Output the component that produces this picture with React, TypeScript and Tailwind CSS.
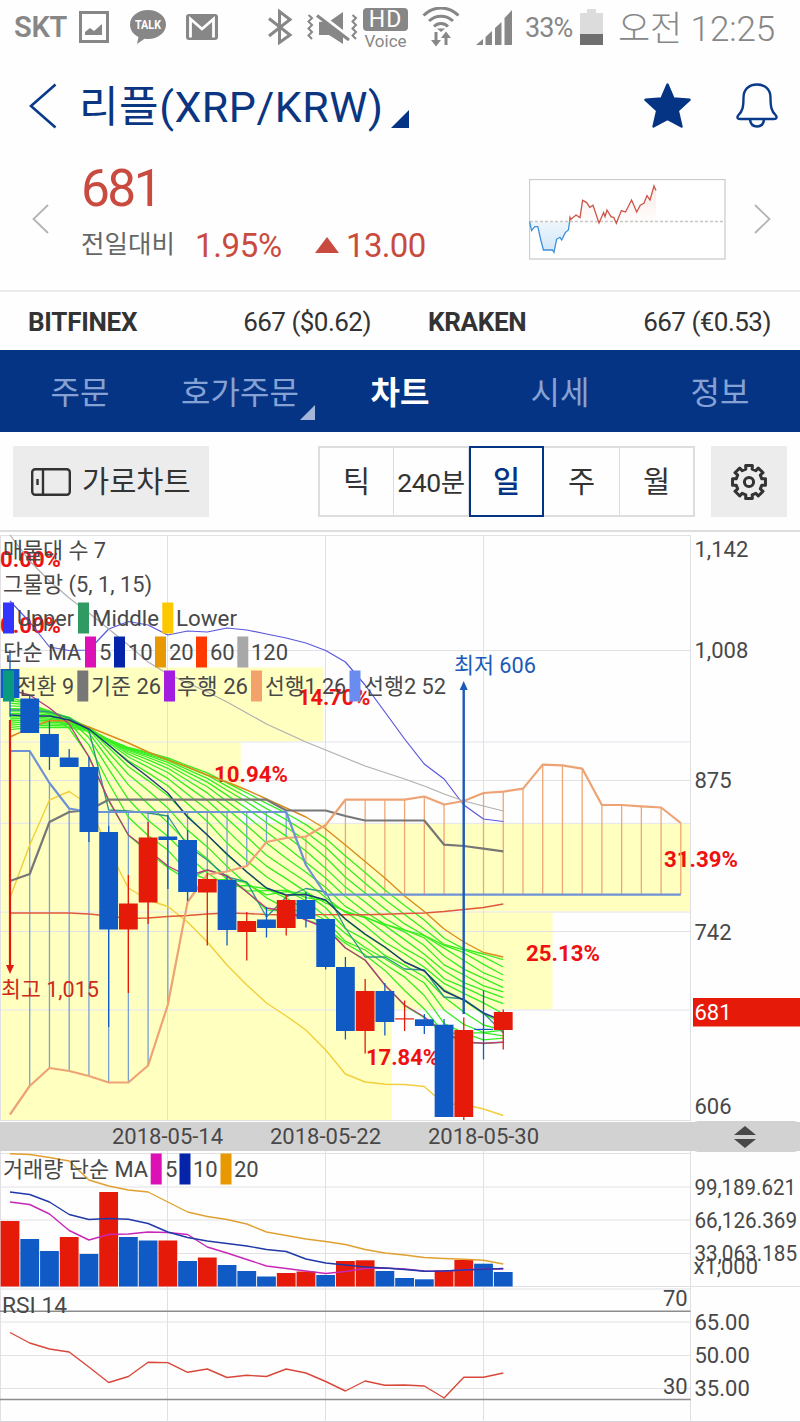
import type { ReactNode } from 'react';

const FONT = "font-[Roboto,'Noto_Sans_CJK_KR',sans-serif]";

const RED = '#e61a09';
const BLUE = '#105ac6';

const STEP = 19.73;
const cx = (i: number) => 10 + STEP * i;

// [top, bottom, high, low, rising]
const CANDLES: [number, number, number, number, boolean][] = [
  [669, 698, 650, 717, false],
  [698.5, 733, 696, 733, false],
  [734, 757, 721, 770, false],
  [757.5, 767, 749, 767, false],
  [767, 832, 757, 842, false],
  [832, 929.5, 826, 1027, false],
  [903.5, 929.5, 875, 993, true],
  [837.5, 902.5, 822, 924, true],
  [836.5, 840, 815, 889, false],
  [840, 892, 830, 901, false],
  [879, 892.5, 873, 945.5, true],
  [880, 930, 876, 945.5, false],
  [921, 932, 912, 960.5, true],
  [919.5, 928, 907, 937.5, false],
  [900, 928, 895, 935.5, true],
  [900, 919, 892, 927.5, false],
  [919, 967, 919, 969.5, false],
  [967, 1031, 957, 1039.5, false],
  [991, 1031, 979, 1053.5, true],
  [991, 1022, 983, 1035.5, false],
  [1018.3, 1019.5, 1000.5, 1031, true],
  [1019.3, 1026, 1014, 1034, false],
  [1024.7, 1117, 1019, 1117, false],
  [1030, 1117, 1017.5, 1120, true],
  [1028.8, 1030, 990.5, 1059.5, false],
  [1012, 1030, 1009.5, 1049.5, true],
];

const UPPER = [601, 622, 647, 650.5, 650, 629, 621.5, 625, 635, 631, 632, 628, 630, 634, 638, 643, 650.5, 662, 685, 712, 739, 764, 779, 805, 819, 821.5];
const LOWER = [898, 845, 800, 791.5, 805, 850, 888, 900, 906.5, 922, 942, 965, 985, 1003, 1016, 1030, 1050, 1074, 1082, 1084.3, 1084.5, 1086.5, 1104, 1104.5, 1109, 1115.5];
const MA5 = [690, 695, 708, 724, 757, 800, 835, 850, 866, 876, 870, 876, 892, 908, 911, 920, 928, 948, 960, 985, 1005, 1017, 1032, 1042, 1043.3, 1042.3];
const MA10 = [715, 716, 716, 720, 729, 745, 762, 777, 793, 817, 835, 854, 872, 888, 895, 894.5, 900, 919, 934, 947, 962, 971, 991, 1000, 1013, 1021];
const MA20 = [737, 728, 720.5, 721, 727, 735, 743, 752, 760, 767, 775, 782, 790, 799, 808, 817, 829, 845, 861.5, 878, 896, 911.5, 929, 942, 952.5, 957];
const MA60 = [913, 913, 913, 913, 914, 916, 918.5, 918, 916.5, 915.5, 914, 913, 913.5, 914.5, 915, 914.6, 914.6, 914.7, 914.7, 914.3, 913.5, 913, 911.5, 909.5, 907.5, 904];
const MA120 = [535, 561, 581, 598, 613, 629, 645, 662, 674, 683, 692, 702, 713, 724, 733, 742, 750, 758, 766, 772.5, 779, 786, 794, 801, 806, 811];
const TENKAN = [710, 710, 712, 718, 730, 810, 811, 813, 816, 846, 860, 877, 882, 917, 897, 888.5, 892, 928, 957, 957, 969, 970, 997, 999, 1013, 1033];
const KIJUN = [881, 874, 822, 812, 810, 799.7, 799.7, 799.7, 799.7, 799.7, 799.7, 799.7, 799.7, 799.7, 810.5, 810.5, 810.5, 816, 820.5, 820.5, 820.5, 820.5, 844.7, 846, 848.7, 851.3];
const SPAN_A = [1114.5, 1086, 1068, 1071, 1076, 1082.5, 1082.5, 1065.5, 1005, 902, 874.5, 871.5, 866, 842, 838, 836.5, 825, 799.7, 799.7, 799.7, 799.7, 796.5, 804.5, 801, 793, 791.7, 788.6, 764.6, 765.3, 768.6, 805, 805, 806.3, 807.5, 823];
const SPAN_B = SPAN_A.map((_, i) => {
  if (i < 2) return 751;
  if (i === 2) return 783;
  if (i === 3) return 808.5;
  if (i < 15) return 812;
  return i === 15 ? 865 : 894.6;
});

const VOLUME: [number, boolean][] = [
  [1221, true], [1239, false], [1251, false], [1237, true], [1254, false], [1192, true], [1237, false],
  [1240.5, false], [1240.5, true], [1261, false], [1257.5, true], [1265, false], [1271, false],
  [1276.5, false], [1273, true], [1271.5, true], [1275, false], [1261, true], [1260.3, true],
  [1271, false], [1278, false], [1279.3, false], [1270.3, true], [1260, true], [1263.7, false], [1272, false],
];
const VOL5 = [1202, 1204.5, 1214, 1230.5, 1240, 1234.5, 1234, 1232, 1232.5, 1234.5, 1247, 1253, 1259.5, 1266, 1268.5, 1271, 1273.5, 1271.5, 1268.5, 1268, 1269, 1271, 1271.3, 1269.8, 1269, 1269];
const VOL10 = [1192, 1194.5, 1202, 1214.5, 1219.5, 1218.5, 1219.3, 1223.5, 1232, 1237.5, 1241, 1243.5, 1246, 1249.5, 1251.5, 1259, 1263, 1265, 1267, 1268, 1269.5, 1271.3, 1271, 1270, 1269.3, 1268.5];
const VOL20 = [1153.7, 1154.5, 1157.5, 1161, 1180, 1186, 1190, 1192, 1202, 1212, 1216.5, 1219.5, 1224, 1232, 1235.5, 1239, 1241.5, 1244.5, 1249.5, 1253, 1255, 1257.5, 1258.5, 1259.3, 1260.3, 1264];
const RSI = [1332.5, 1343, 1349, 1352, 1367, 1382.5, 1376.5, 1362.3, 1362.6, 1372.3, 1369, 1377.5, 1375.3, 1376.5, 1369, 1373, 1381.5, 1391, 1381, 1385.3, 1385, 1386, 1398, 1377.2, 1377.2, 1373];

// closes before the visible range, oldest first, needed by the averages of the net
const PRIOR = [770, 765, 760, 755, 750, 745, 740, 735, 735, 735, 730, 725, 720, 715, 705, 700, 695, 690];

const toPrice = (y: number) => 875 * Math.exp((780.3 - y) / 916);
const toY = (price: number) => 780.3 - 916 * Math.log(price / 875);

const closes = [...PRIOR, ...CANDLES.map(([top, bottom, , , up]) => (up ? top : bottom))].map(toPrice);

function movingAverage(length: number) {
  return CANDLES.map((_, i) => {
    const end = PRIOR.length + i + 1;
    const part = closes.slice(Math.max(0, end - length), end);
    return toY(part.reduce((a, b) => a + b, 0) / part.length);
  });
}

const NET = Array.from({ length: 15 }, (_, k) => movingAverage(5 + k));

const points = (ys: number[]) => ys.map((y, i) => `${cx(i).toFixed(1)},${y.toFixed(1)}`).join(' ');

function Line({ ys, color, width = 1.2 }: { ys: number[]; color: string; width?: number }) {
  return <polyline points={points(ys)} fill="none" stroke={color} strokeWidth={width} strokeLinejoin="round" />;
}

interface LabelProps {
  x: number;
  y: number;
  w?: number;
  children: ReactNode;
  fill?: string;
  className?: string;
}

function Label({ x, y, w, children, fill = '#484848', className = 'text-[22px]' }: LabelProps) {
  return (
    <text x={x} y={y} fill={fill} className={className} textLength={w} lengthAdjust="spacingAndGlyphs">
      {children}
    </text>
  );
}

function Swatches({ y, items }: { y: number; items: [number, string][] }) {
  return (
    <>
      {items.map(([x, color]) => (
        <rect key={x} x={x} y={y} width={11} height={31} fill={color} />
      ))}
    </>
  );
}

function GridX({ y1, y2 }: { y1: number; y2: number }) {
  return (
    <g stroke="#e0e0e4">
      {[0.5, 167.5, 325.5, 483.5, 690.5].map((x) => (
        <line key={x} x1={x} x2={x} y1={y1} y2={y2} />
      ))}
    </g>
  );
}

function GridY({ ys }: { ys: number[] }) {
  return (
    <g stroke="#e2e2e6">
      {ys.map((y) => (
        <line key={y} x1={0} x2={691} y1={y} y2={y} />
      ))}
    </g>
  );
}

const BANDS = [
  [323, 667.5, 74],
  [240.7, 742, 81.5],
  [690.5, 823.5, 88],
  [552.5, 912, 97.5],
  [392, 1010, 110],
];

function PriceChart() {
  return (
    <svg viewBox="0 532 800 590" className="block w-[800px] h-[590px]">
      {BANDS.map(([w, y, h]) => (
        <rect key={y} x={0} y={y} width={w} height={h} fill="#ffffc0" />
      ))}
      <GridY ys={[535.5, 650.5, 780.5, 931.5, 1120.5]} />
      <g stroke="#e4e4ec">
        {[742, 823.3, 912, 1010].map((y) => (
          <line key={y} x1={0} x2={691} y1={y} y2={y} />
        ))}
      </g>
      <GridX y1={535} y2={1121} />

      <g className="font-bold text-[21.5px]">
        <Label x={0} y={567} w={61} fill="#ee1111" className="">0.00%</Label>
        <Label x={0} y={632.5} w={61} fill="#ee1111" className="">0.00%</Label>
        <Label x={298} y={704.7} w={72.5} fill="#ee1111" className="">14.70%</Label>
        <Label x={214} y={782.3} w={74} fill="#ee1111" className="">10.94%</Label>
        <Label x={664} y={867} w={74} fill="#ee1111" className="">31.39%</Label>
        <Label x={526} y={960.7} w={74} fill="#ee1111" className="">25.13%</Label>
        <Label x={366} y={1064.8} w={73} fill="#ee1111" className="">17.84%</Label>
      </g>

      {SPAN_A.map((y, i) =>
        i === 0 ? null : (
          <line
            key={i}
            x1={cx(i)}
            x2={cx(i)}
            y1={y}
            y2={SPAN_B[i]}
            stroke={y > SPAN_B[i] ? '#7a9fd2' : '#eea673'}
            strokeWidth={1.3}
          />
        ),
      )}

      {NET.map((ys, k) => (
        <Line key={k} ys={ys} color="#35ee20" width={1.3} />
      ))}
      <Line ys={UPPER} color="#5a58dc" />
      <Line ys={LOWER} color="#f3cd3c" width={1.4} />
      <Line ys={MA120} color="#b0b0b0" />
      <Line ys={MA60} color="#e0583a" width={1.4} />
      <Line ys={MA20} color="#d88c1c" width={1.4} />
      <Line ys={TENKAN} color="#2f9488" width={1.3} />
      <Line ys={MA5} color="#b83a80" width={1.4} />
      <Line ys={MA10} color="#1d3a78" width={1.4} />
      <Line ys={KIJUN} color="#777777" width={2.2} />
      <Line ys={SPAN_A} color="#eda373" width={2.2} />
      <Line ys={SPAN_B} color="#6f92d6" width={2.2} />

      {CANDLES.map(([top, bottom, high, low, up], i) => (
        <g key={i} fill={up ? RED : BLUE} stroke={up ? RED : BLUE}>
          <line x1={cx(i)} x2={cx(i)} y1={high} y2={low} strokeWidth={1.3} />
          <rect x={cx(i) - 9.4} y={top} width={18.8} height={bottom - top} stroke="none" />
        </g>
      ))}

      <g stroke="#1b5ab8" fill="#1b5ab8">
        <line x1={463.7} x2={463.7} y1={688} y2={1014} strokeWidth={2.4} />
        <path d="M463.7 681 L467.7 690 H459.7 Z" stroke="none" />
      </g>
      <g stroke="#e01a10" fill="#e01a10">
        <line x1={10} x2={10} y1={720} y2={968} strokeWidth={2.2} />
        <path d="M10 974 L14 965 H6 Z" stroke="none" />
      </g>
      <Label x={454} y={673} w={82} fill="#1b5ab8">최저 606</Label>
      <Label x={1} y={997} w={98} fill="#cc2a1a">최고 1,015</Label>

      <Label x={3} y={558} w={103}>매물대 수 7</Label>
      <Label x={3} y={592} w={149}>그물망 (5, 1, 15)</Label>

      <Swatches y={602.5} items={[[3, '#3434ff'], [78, '#2f9a62'], [162.3, '#fcc800']]} />
      <Label x={17} y={626} w={57}>Upper</Label>
      <Label x={92} y={626} w={67}>Middle</Label>
      <Label x={176} y={626} w={61}>Lower</Label>

      <Swatches
        y={636.5}
        items={[[85, '#dc10b4'], [114, '#0624aa'], [155, '#e89800'], [196, '#ff3a00'], [237.3, '#a8a8a8']]}
      />
      <Label x={3} y={660} w={78}>단순 MA</Label>
      <Label x={99} y={660}>5</Label>
      <Label x={128} y={660}>10</Label>
      <Label x={169} y={660}>20</Label>
      <Label x={210} y={660}>60</Label>
      <Label x={251} y={660}>120</Label>

      <Swatches
        y={670.5}
        items={[[3, '#0a9a80'], [77.3, '#777777'], [164, '#a41ce0'], [251, '#f4a26c'], [349.5, '#6a8cf0']]}
      />
      <Label x={17} y={693.5} w={57}>전환 9</Label>
      <Label x={91} y={693.5} w={70}>기준 26</Label>
      <Label x={177} y={693.5} w={71}>후행 26</Label>
      <Label x={265} y={693.5} w={81}>선행1 26</Label>
      <Label x={364} y={693.5} w={82}>선행2 52</Label>

      <Label x={694.5} y={557}>1,142</Label>
      <Label x={694.5} y={658}>1,008</Label>
      <Label x={694.5} y={788}>875</Label>
      <Label x={694.5} y={939.5}>742</Label>
      <rect x={693} y={998} width={107} height={28.5} fill={RED} />
      <Label x={694.5} y={1020} fill="#ffffff">681</Label>
      <Label x={694.5} y={1114}>606</Label>
    </svg>
  );
}

function DateBar() {
  return (
    <div className="relative flex items-center h-[29px] bg-[#d2d2d2] text-[22px] leading-none text-[#484848]">
      <span className="w-[112px] ml-[112px]">2018-05-14</span>
      <span className="w-[112px] ml-[46px]">2018-05-22</span>
      <span className="w-[112px] ml-[46px]">2018-05-30</span>
      <div className="absolute left-[692px] -top-px w-[108px] h-[31px] rounded-md bg-[#d2d2d2] flex items-center pl-[42px]">
        <svg viewBox="0 0 22 22" className="w-[22px] h-[22px]" fill="#484848">
          <path d="M11 0 L22 9 H0 Z M0 13 H22 L11 22 Z" />
        </svg>
      </div>
    </div>
  );
}

function VolumeChart() {
  return (
    <svg viewBox="0 1151 800 137" className="block w-[800px] h-[137px]">
      <GridY ys={[1153.5, 1187, 1220, 1253.5]} />
      <line x1={0} x2={800} y1={1286.5} y2={1286.5} stroke="#e2e2e6" />
      <GridX y1={1151} y2={1288} />
      {VOLUME.map(([top, up], i) => (
        <rect key={i} x={cx(i) - 9.4} y={top} width={18.8} height={1286.5 - top} fill={up ? RED : BLUE} />
      ))}
      <Line ys={VOL20} color="#e0a030" width={1.4} />
      <Line ys={VOL5} color="#c828b8" width={1.4} />
      <Line ys={VOL10} color="#2038a8" width={1.4} />
      <Label x={3} y={1177} w={145}>거래량 단순 MA</Label>
      <Swatches y={1153.5} items={[[150.7, '#dc10b4'], [179.5, '#0624aa'], [220.5, '#e89800']]} />
      <Label x={165} y={1177}>5</Label>
      <Label x={193} y={1177}>10</Label>
      <Label x={234} y={1177}>20</Label>
      <Label x={694.5} y={1194.5} w={101.5}>99,189.621</Label>
      <Label x={694.5} y={1228} w={102.5}>66,126.369</Label>
      <Label x={694.5} y={1260.5} w={102.5}>33,063.185</Label>
      <Label x={693.5} y={1273.5} w={64.5}>x1,000</Label>
    </svg>
  );
}

function RsiChart() {
  return (
    <svg viewBox="0 1288 800 134" className="block w-[800px] h-[134px]">
      <GridY ys={[1289, 1322, 1355.5, 1388.5]} />
      <line x1={0} x2={800} y1={1421.5} y2={1421.5} stroke="#d4d4d8" />
      <GridX y1={1288} y2={1422} />
      <g stroke="#8c8c8c" strokeWidth={1.5}>
        <line x1={0} x2={690.5} y1={1311.3} y2={1311.3} />
        <line x1={0} x2={690.5} y1={1399.4} y2={1399.4} />
      </g>
      <Line ys={RSI} color="#d8483a" width={1.4} />
      <Label x={2} y={1312.5} w={65}>RSI 14</Label>
      <Label x={663} y={1305.5}>70</Label>
      <Label x={663} y={1394}>30</Label>
      <Label x={694.5} y={1329.5}>65.00</Label>
      <Label x={694.5} y={1363}>50.00</Label>
      <Label x={694.5} y={1396}>35.00</Label>
    </svg>
  );
}

function StatusBar() {
  return (
    <div className="flex items-start h-[56px] pl-[14px] text-[#878787] fill-[#878787] whitespace-nowrap leading-none">
      <span className="w-[65px] mt-[13px] text-[29px] font-semibold tracking-[-0.01em]">SKT</span>
      <svg viewBox="0 0 30 32" className="w-[30px] h-[32px] mt-[11px]">
        <path d="M0 0H30V32H0Z M3 3V29H27V3Z" fillRule="evenodd" />
        <path d="M6 24 V21 L11 17 L15 20 L23 13 V24 Z" />
      </svg>
      <svg viewBox="0 0 36 34" className="w-[36px] h-[34px] mt-[10px] ml-[21px]">
        <path d="M18 0C8 0 0 6.300 0 14.500C0 20 3.500 24.500 8.500 27L7 34L14.500 28.800C16 29 17 29 18 29C28 29 36 22.700 36 14.500C36 6.300 28 0 18 0Z" />
        <text x="18" y="19.300" textAnchor="middle" textLength="26" lengthAdjust="spacingAndGlyphs" fill="#fff" className="text-[12.5px] font-bold">
          TALK
        </text>
      </svg>
      <svg viewBox="0 0 32 26" className="w-[32px] h-[26px] mt-[14px] ml-[20px]">
        <rect width="32" height="26" rx="3" />
        <path d="M4.500 23.500V5L16 15L27.500 5V23.500" fill="none" stroke="#fff" strokeWidth="2.800" />
      </svg>
      <svg viewBox="0 0 26 36" className="w-[26px] h-[36px] mt-[9px] ml-[49px]" fill="none" stroke="#878787" strokeWidth="3">
        <path d="M2 9.500L23 26L12.500 33.500V2.500L23 10.500L2 27" />
      </svg>
      <svg viewBox="0 0 52 34" className="w-[52px] h-[34px] mt-[10px] ml-[14px]">
        <path d="M12 12V25H22L36 34V2L23 11Z" />
        <path d="M11 3L43 28" stroke="#fefefe" strokeWidth="4" />
        <path d="M10 5.500L42 30" stroke="#878787" strokeWidth="3" />
        <g fill="none" stroke="#878787" strokeWidth="2">
          <path d="M1.500 5L5 8L1.500 11.500L5 15L1.500 18.500L5 22L1.500 25.500L5 29" />
          <path d="M45.500 5L49 8L45.500 11.500L49 15L45.500 18.500L49 22L45.500 25.500L49 29" />
        </g>
      </svg>
      <div className="flex flex-col items-center w-[45px] mt-[8px] ml-[4px]">
        <span className="w-full h-[23px] rounded-[4px] bg-[#878787] text-white text-[23px] leading-[24px] text-center tracking-[0.04em]">HD</span>
        <span className="text-[17px] mt-[2px]">Voice</span>
      </div>
      <svg viewBox="0 0 38 40" className="w-[38px] h-[40px] mt-[7px] ml-[14px]" fill="none" stroke="#878787" strokeWidth="3">
        <path d="M1.500 8.500C12 -1.500 26 -1.500 36.500 8.500M7 14C14 7.500 24 7.500 31 14M12 19.500C16 15.500 22 15.500 26 19.500" />
        <path d="M15 21.500H23L19 25Z" fill="#878787" stroke="none" />
        <path d="M14 25V35M24 38V29" />
        <path d="M9 33H19L14 39.500ZM19 31H29L24 24.500Z" fill="#878787" stroke="none" />
      </svg>
      <svg viewBox="0 0 36 35" className="w-[36px] h-[35px] mt-[10px] ml-[16px]">
        <path d="M0 35L7 29V35ZM9.500 27L16 21V35H9.500ZM19 18L25.500 12V35H19ZM28.500 8L36 0V35H28.500Z" />
      </svg>
      <span className="w-[55px] ml-[13px] mt-[15px] text-[27px] tracking-[-0.035em]">33%</span>
      <svg viewBox="0 0 23 36" className="w-[23px] h-[36px] mt-[9px]">
        <path d="M7 0H16V4H23V25H0V4H7Z" fill="#dcdcdc" />
        <rect y="25" width="23" height="11" fill="#6f6f6f" />
      </svg>
      <span className="ml-[15px] mt-[12px] text-[35px] font-light tracking-[-0.003em]">오전 12:25</span>
    </div>
  );
}

function TitleBar() {
  return (
    <header className="flex items-start h-[104px] pl-[29px] text-[#0a3580]">
      <svg viewBox="0 0 28 46" className="w-[28px] h-[46px] mt-[27px]" fill="none" stroke="#0a3a8c" strokeWidth="2.600">
        <path d="M26.500 1.500L2 23L26.500 44.500" />
      </svg>
      <h1 className="w-[304px] ml-[22px] mt-[26px] text-[43px] leading-[50px] whitespace-nowrap tracking-[0.012em]">리플(XRP/KRW)</h1>
      <svg viewBox="0 0 18 18" className="w-[18px] h-[18px] mt-[54px] ml-[8px]" fill="#063484">
        <path d="M18 0V18H0Z" />
      </svg>
      <svg viewBox="0 0 47 45" className="w-[47px] h-[45px] mt-[27px] ml-[235px]" fill="#063484">
        <path
          d="M23.500 1.500L29.500 15.500L45.500 16.800L33.800 27.500L37.500 43.500L23.500 36L9.500 43.500L13.200 27.500L1.500 16.800L17.500 15.500Z"
          stroke="#063484"
          strokeWidth="2.400"
          strokeLinejoin="round"
        />
      </svg>
      <svg viewBox="0 0 42 45" className="w-[42px] h-[45px] mt-[27px] ml-[45px]" fill="none" stroke="#0a3a8c" strokeWidth="2.400">
        <path d="M21 1.500C12.500 1.500 7.500 7 7.500 14.500C7.500 24 6.500 28 2.500 32C0.500 34.500 1.500 36 4 36H38C40.500 36 41.500 34.500 39.500 32C35.500 28 34.500 24 34.500 14.500C34.500 7 29.500 1.500 21 1.500Z" />
        <path d="M14 36.500C14.500 41 17 43.500 21 43.500C25 43.500 27.500 41 28 36.500" />
      </svg>
    </header>
  );
}

const SPARK_DOWN =
  '529.6,221.6 531.6,230.6 534.7,226.7 537.8,226.7 540.8,240 543.4,250 552.5,250 554,252.3 556.6,239.3 560,237.3 561.7,240 565.3,232.6 568.4,230 569.6,221.5';
const SPARK_UP =
  '569.6,221.5 570,217.3 571,219.3 576,215 580,217.6 582.6,200.3 586.7,202.6 589.8,207.3 593,205.3 599,223 603.6,212.6 605,216.6 607,210 611,216.6 613.8,217.6 616.3,223.3 621.4,210.6 625.5,212 631.6,200 636.7,212 640.3,205.3 643.9,203.3 647,195.6 650,200 654,186 656,190.6';

function Sparkline() {
  return (
    <svg viewBox="529 179 197 81" className="w-[197px] h-[81px]" fill="none" strokeWidth="1.300">
      <defs>
        <linearGradient id="down" x1="0" y1="0" x2="0" y2="1">
          <stop offset="0" stopColor="#eef6fc" />
          <stop offset="1" stopColor="#cfe6f8" />
        </linearGradient>
        <linearGradient id="up" x1="0" y1="0" x2="0" y2="1">
          <stop offset="0" stopColor="#fbe9e4" />
          <stop offset="1" stopColor="#ffffff" />
        </linearGradient>
      </defs>
      <rect x="529.500" y="179.500" width="195.500" height="79.500" fill="#fff" stroke="#cccccc" />
      <polygon points={SPARK_DOWN} fill="url(#down)" />
      <polygon points={`${SPARK_UP} 656,221.5`} fill="url(#up)" />
      <line x1="530" x2="725" y1="221.500" y2="221.500" stroke="#c8c8c0" strokeDasharray="3 2" />
      <polyline points={SPARK_DOWN} stroke="#3f8fd8" />
      <polyline points={SPARK_UP} stroke="#cc5548" />
    </svg>
  );
}

function Quote() {
  return (
    <section className="flex h-[132px] text-[#c94b40] whitespace-nowrap">
      <svg viewBox="0 0 17 30" className="w-[17px] h-[30px] mt-[44px] ml-[32px]" fill="none" stroke="#b4b4b4" strokeWidth="1.800">
        <path d="M16 1L1.500 15L16 29" />
      </svg>
      <div className="w-[480px] pl-[32px]">
        <p className="h-[56px] text-[51.5px] leading-[58px] tracking-[-0.05em]">681</p>
        <div className="flex items-center h-[40px] mt-[9px] text-[33px] leading-none">
          <span className="w-[114px] text-[25.5px] text-[#666666]">전일대비</span>
          <span className="w-[120px] tracking-[-0.01em]">1.95%</span>
          <svg viewBox="0 0 24 16" className="w-[24px] h-[16px]" fill="#c94b40">
            <path d="M12 0L24 16H0Z" />
          </svg>
          <span className="ml-[7px] tracking-[-0.02em]">13.00</span>
        </div>
      </div>
      <div className="mt-[19px]">
        <Sparkline />
      </div>
      <svg viewBox="0 0 17 30" className="w-[17px] h-[30px] mt-[44px] ml-[28px]" fill="none" stroke="#b4b4b4" strokeWidth="1.800">
        <path d="M1 1L15.500 15L1 29" />
      </svg>
    </section>
  );
}

function Exchanges() {
  return (
    <section className="flex items-center h-[58px] pl-[28px] pr-[29px] pt-[2px] text-[26px] text-[#333333] leading-none whitespace-nowrap">
      <span className="w-[190px] font-bold tracking-[-0.01em]">BITFINEX</span>
      <span className="w-[153px] text-right tracking-[-0.02em]">667 ($0.62)</span>
      <span className="w-[190px] ml-[57px] font-bold tracking-[-0.012em]">KRAKEN</span>
      <span className="flex-1 text-right tracking-[-0.02em]">667 (€0.53)</span>
    </section>
  );
}

const TABS = ['주문', '호가주문', '차트', '시세', '정보'];

function Tabs() {
  return (
    <nav className="grid grid-cols-5 h-[82px] bg-[#063484] text-[32px] text-[#86a2d4]">
      {TABS.map((tab) => (
        <div key={tab} className="relative flex items-center justify-center pt-1">
          <span className={tab === '차트' ? 'font-bold text-white' : ''}>{tab}</span>
          {tab === '호가주문' && (
            <svg viewBox="0 0 15 15" className="absolute right-[5px] bottom-[12px] w-[15px] h-[15px]" fill="#a4b6da">
              <path d="M15 0V15H0Z" />
            </svg>
          )}
        </div>
      ))}
    </nav>
  );
}

// eight square teeth
const GEAR = Array.from({ length: 8 }, (_, k) => {
  const at = (r: number, deg: number) => {
    const a = ((k * 45 + deg - 90) * Math.PI) / 180;
    return `${(r * Math.cos(a)).toFixed(2)} ${(r * Math.sin(a)).toFixed(2)}`;
  };
  return `${at(13.2, -14)} L${at(16.8, -11.5)} L${at(16.8, 11.5)} L${at(13.2, 14)}`;
}).join(' L');

const PERIODS = ['틱', '240분', '일', '주', '월'];

function Toolbar() {
  return (
    <section className="flex h-[100px] pt-[14px] pl-[13px] border-b-2 border-[#dedede] text-[29.5px] text-[#333333] leading-none whitespace-nowrap">
      <button className="flex items-center w-[196px] h-[71px] pl-[18px] bg-[#ececec]">
        <svg viewBox="0 0 40 28" className="w-[40px] h-[28px]" fill="none" stroke="#333" strokeWidth="2.400">
          <rect x="1.200" y="1.200" width="37.600" height="25.600" rx="3" />
          <path d="M12 1V27M6.500 11V17" />
        </svg>
        <span className="ml-[11px] pt-[3px]">가로차트</span>
      </button>
      <div className="grid grid-cols-[74px_75px_75px_76px_73px] w-[377px] h-[71px] ml-[109px] border-2 border-[#dddddd]">
        {PERIODS.map((period) => (
          <div
            key={period}
            className={
              period === '일'
                ? 'flex items-center justify-center -my-[2px] border-2 border-[#063484] text-[#063484] font-medium pt-[3px]'
                : 'flex items-center justify-center border-r last:border-r-0 border-[#dddddd] pt-[3px]'
            }
          >
            <span className={period === '240분' ? 'text-[26.5px] tracking-[-0.015em]' : ''}>{period}</span>
          </div>
        ))}
      </div>
      <button className="flex items-center justify-center w-[76px] h-[71px] ml-[16px] bg-[#ececec]">
        <svg viewBox="-19 -19 38 38" className="w-[38px] h-[38px]" fill="none" stroke="#333" strokeWidth="3" strokeLinejoin="round">
          <path d={`M${GEAR} Z`} />
          <circle r="4.600" />
        </svg>
      </button>
    </section>
  );
}

export default function App() {
  return (
    <main className={`w-[800px] h-[1422px] overflow-hidden bg-[#fefefe] ${FONT}`}>
      <StatusBar />
      <TitleBar />
      <Quote />
      <div className="border-t-2 border-[#ebebeb] -mt-[2px]" />
      <Exchanges />
      <Tabs />
      <Toolbar />
      <PriceChart />
      <DateBar />
      <VolumeChart />
      <RsiChart />
    </main>
  );
}
